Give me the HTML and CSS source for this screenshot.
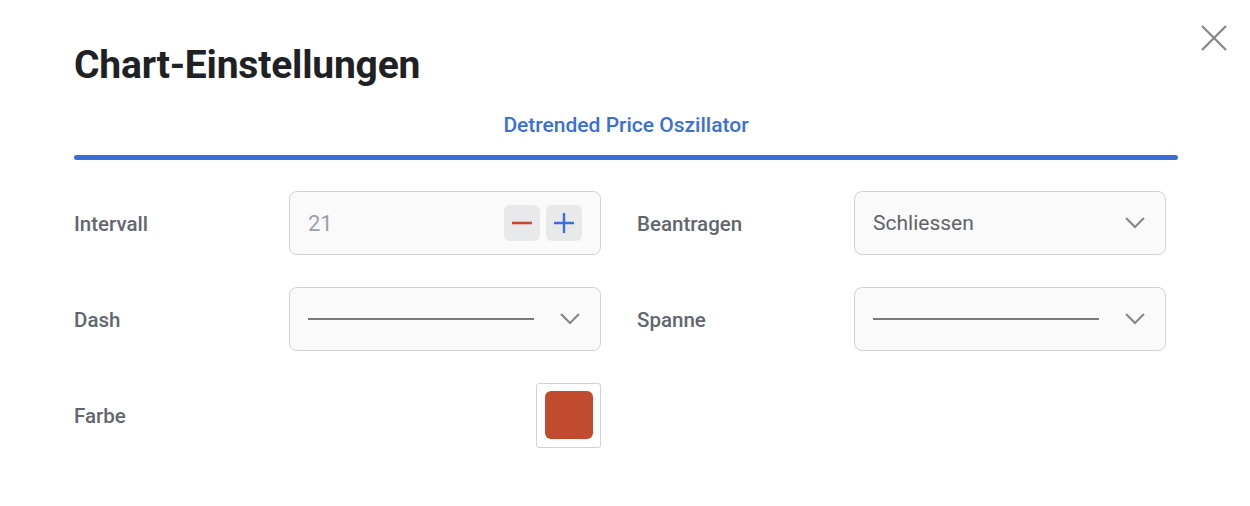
FILE: index.html
```html
<!DOCTYPE html>
<html lang="de">
<head>
<meta charset="utf-8">
<title>Chart-Einstellungen</title>
<link rel="stylesheet" href="styles.css">
</head>
<body>
<div class="dialog">
  <button class="close" aria-label="Schliessen">
    <svg width="26" height="26" viewBox="0 0 26 26"><path d="M1 1 L25 25 M25 1 L1 25" stroke="#80868b" stroke-width="2.2" fill="none"/></svg>
  </button>
  <h1 class="title">Chart-Einstellungen</h1>
  <div class="tabs">
    <div class="tab">Detrended Price Oszillator</div>
    <div class="tab-bar"></div>
  </div>
  <div class="grid">
    <div class="field">
      <span class="label">Intervall</span>
      <div class="control num">
        <span class="num-val">21</span>
        <div class="steps">
          <span class="step"><svg width="20" height="20" viewBox="0 0 20 20"><path d="M0 10 H20" stroke="#c8492c" stroke-width="2.6"/></svg></span>
          <span class="step"><svg width="20" height="20" viewBox="0 0 20 20"><path d="M0 10 H20 M10 0 V20" stroke="#3b6fd8" stroke-width="2.4"/></svg></span>
        </div>
      </div>
    </div>
    <div class="field">
      <span class="label">Beantragen</span>
      <div class="control select">
        <span class="sel-text">Schliessen</span>
        <svg class="chev" width="20" height="12" viewBox="0 0 20 12"><path d="M1 1 L10 10 L19 1" stroke="#80868b" stroke-width="2" fill="none"/></svg>
      </div>
    </div>
    <div class="field">
      <span class="label">Dash</span>
      <div class="control select">
        <span class="line"></span>
        <svg class="chev" width="20" height="12" viewBox="0 0 20 12"><path d="M1 1 L10 10 L19 1" stroke="#80868b" stroke-width="2" fill="none"/></svg>
      </div>
    </div>
    <div class="field">
      <span class="label">Spanne</span>
      <div class="control select">
        <span class="line"></span>
        <svg class="chev" width="20" height="12" viewBox="0 0 20 12"><path d="M1 1 L10 10 L19 1" stroke="#80868b" stroke-width="2" fill="none"/></svg>
      </div>
    </div>
    <div class="field">
      <span class="label">Farbe</span>
      <div class="color-cell">
        <div class="color-box"><span class="swatch"></span></div>
      </div>
    </div>
  </div>
</div>
</body>
</html>
```
FILE: styles.css
```css
* { box-sizing: border-box; }
html, body { margin: 0; padding: 0; background: #fff; }
body { font-family: Roboto, "Noto Sans", sans-serif; width: 1250px; height: 506px; overflow: hidden; }
.dialog { position: relative; padding: 39px 72px 0 74px; }
.close { position: absolute; top: 25px; right: 23px; background: none; border: 0; padding: 0; width: 26px; height: 26px; cursor: pointer; }
.close svg { display: block; }
.title { margin: 0; font-size: 39px; font-weight: 700; color: #202124; line-height: 52px; letter-spacing: -0.2px; }
.tabs { margin-top: 19px; display: flex; flex-direction: column; align-items: center; }
.tab { font-size: 21px; font-weight: 500; color: #3b6fd8; line-height: 30px; }
.tab-bar { width: 100%; height: 5px; background: #3b6fd8; border-radius: 3px; margin-top: 15px; }
.grid { display: grid; grid-template-columns: 527px 529px; column-gap: 36px; row-gap: 32px; margin-top: 31px; width: 1092px; }
.field { display: flex; align-items: center; height: 64px; }
.label { flex: 1; font-size: 20.5px; font-weight: 500; color: #62666d; padding-top: 1px; }
.control { width: 312px; flex: none; height: 64px; border: 1px solid #d1d2d6; border-radius: 8px; background: #fafafa; display: flex; align-items: center; padding: 0 18px 0 18px; }
.num-val { font-size: 22px; color: #9aa0a6; flex: 1; }
.steps { display: flex; gap: 6px; }
.step { width: 36px; height: 36px; border-radius: 6px; background: #e8e9eb; display: flex; align-items: center; justify-content: center; }
.step svg { display: block; }
.select { justify-content: space-between; padding-right: 20px; }
.sel-text { font-size: 21px; color: #5f6368; }
.line { width: 226px; height: 2px; background: #7a7a7d; }
.chev { display: block; }
.color-cell { width: 312px; flex: none; display: flex; justify-content: flex-end; }
.color-box { width: 65px; height: 65px; border: 1px solid #d1d2d6; border-radius: 3px; display: flex; align-items: center; justify-content: center; }
.swatch { width: 48px; height: 48px; border-radius: 6px; background: #c04b2e; }
```
